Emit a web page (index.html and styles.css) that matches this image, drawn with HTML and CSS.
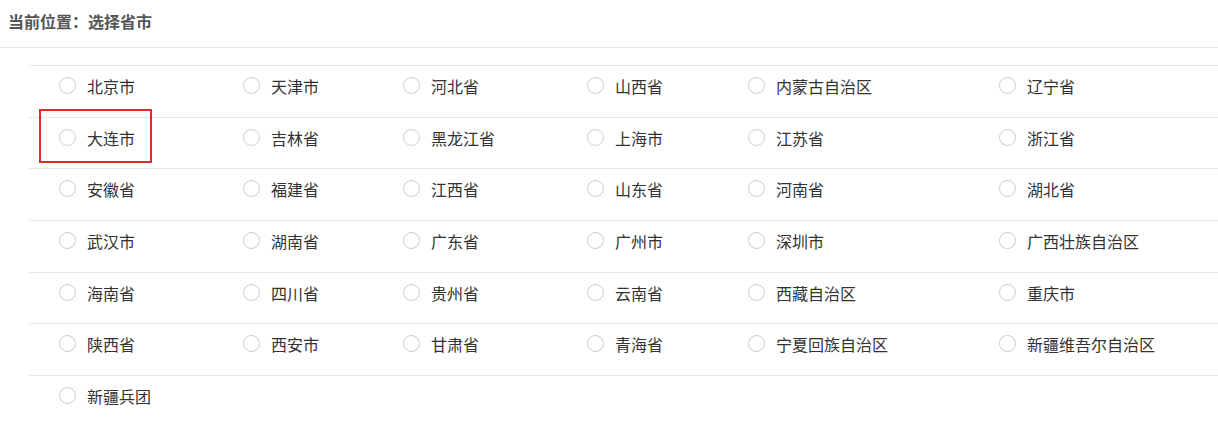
FILE: index.html
```html
<!DOCTYPE html>
<html lang="zh">
<head>
<meta charset="utf-8">
<link rel="stylesheet" href="styles.css">
</head>
<body>
<div class="page">
  <div class="crumb">当前位置：选择省市</div>
  <div class="table">
    <div class="row">
      <label class="cell"><span class="radio"></span>北京市</label>
      <label class="cell"><span class="radio"></span>天津市</label>
      <label class="cell"><span class="radio"></span>河北省</label>
      <label class="cell"><span class="radio"></span>山西省</label>
      <label class="cell"><span class="radio"></span>内蒙古自治区</label>
      <label class="cell"><span class="radio"></span>辽宁省</label>
    </div>
    <div class="row">
      <label class="cell"><span class="radio"></span>大连市</label>
      <label class="cell"><span class="radio"></span>吉林省</label>
      <label class="cell"><span class="radio"></span>黑龙江省</label>
      <label class="cell"><span class="radio"></span>上海市</label>
      <label class="cell"><span class="radio"></span>江苏省</label>
      <label class="cell"><span class="radio"></span>浙江省</label>
    </div>
    <div class="row">
      <label class="cell"><span class="radio"></span>安徽省</label>
      <label class="cell"><span class="radio"></span>福建省</label>
      <label class="cell"><span class="radio"></span>江西省</label>
      <label class="cell"><span class="radio"></span>山东省</label>
      <label class="cell"><span class="radio"></span>河南省</label>
      <label class="cell"><span class="radio"></span>湖北省</label>
    </div>
    <div class="row">
      <label class="cell"><span class="radio"></span>武汉市</label>
      <label class="cell"><span class="radio"></span>湖南省</label>
      <label class="cell"><span class="radio"></span>广东省</label>
      <label class="cell"><span class="radio"></span>广州市</label>
      <label class="cell"><span class="radio"></span>深圳市</label>
      <label class="cell"><span class="radio"></span>广西壮族自治区</label>
    </div>
    <div class="row">
      <label class="cell"><span class="radio"></span>海南省</label>
      <label class="cell"><span class="radio"></span>四川省</label>
      <label class="cell"><span class="radio"></span>贵州省</label>
      <label class="cell"><span class="radio"></span>云南省</label>
      <label class="cell"><span class="radio"></span>西藏自治区</label>
      <label class="cell"><span class="radio"></span>重庆市</label>
    </div>
    <div class="row">
      <label class="cell"><span class="radio"></span>陕西省</label>
      <label class="cell"><span class="radio"></span>西安市</label>
      <label class="cell"><span class="radio"></span>甘肃省</label>
      <label class="cell"><span class="radio"></span>青海省</label>
      <label class="cell"><span class="radio"></span>宁夏回族自治区</label>
      <label class="cell"><span class="radio"></span>新疆维吾尔自治区</label>
    </div>
    <div class="row">
      <label class="cell"><span class="radio"></span>新疆兵团</label>
    </div>
  </div>
  <div class="highlight"></div>
</div>
</body>
</html>
```

FILE: styles.css
```css
html, body {
  margin: 0;
  padding: 0;
  background: #fff;
}
body {
  font-family: "Microsoft YaHei", "Noto Sans CJK SC", "Noto Sans", sans-serif;
  color: #333;
  font-size: 16px;
}
.page {
  position: relative;
  width: 1218px;
  height: 423px;
  overflow: hidden;
}
.crumb {
  padding: 10px 8px 15px;
  line-height: 22px;
  font-size: 16px;
  font-weight: bold;
  color: #555;
  border-bottom: 1px solid #e6e6e6;
}
.table {
  margin: 17px 0 0 29px;
}
.row {
  box-sizing: border-box;
  height: 51.67px;
  border-top: 1px solid #e6e6e6;
  display: grid;
  grid-template-columns: 184px 160px 184px 161px 251px 1fr;
}
.cell {
  padding: 10px 0 0 30px;
  line-height: 20px;
  display: flex;
  align-items: flex-start;
  gap: 11px;
  white-space: nowrap;
  font-size: 16px;
}
.radio {
  flex: none;
  box-sizing: border-box;
  width: 17px;
  height: 17px;
  margin-top: 1px;
  border: 1px solid #cbcbcb;
  border-radius: 50%;
  background: #fff;
}
.highlight {
  position: absolute;
  left: 39px;
  top: 109px;
  width: 113px;
  height: 54px;
  box-sizing: border-box;
  border: 2px solid #e02a2a;
}
```
